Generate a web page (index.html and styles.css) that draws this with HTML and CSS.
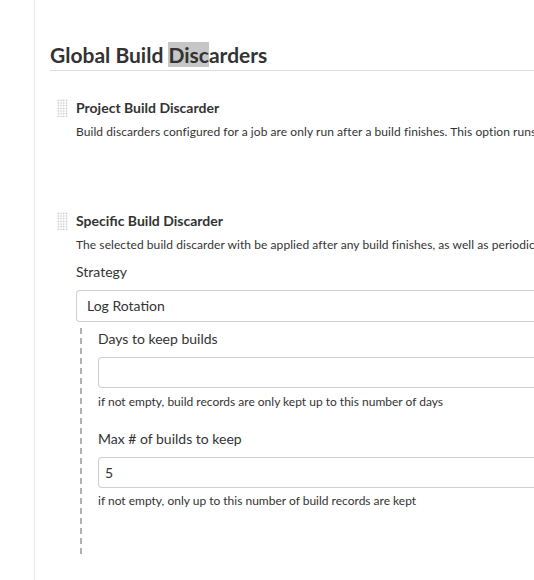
FILE: index.html
```html
<!DOCTYPE html>
<html lang="en">
<head>
    <meta charset="UTF-8">
    <title>Global Build Discarders</title>
    <link rel="stylesheet" href="styles.css">
</head>
<body>
    <div class="page">
        <section class="config-section">
            <h2 class="section-title">Global Build <span class="selected">Disc</span>arders</h2>

            <div class="discarder">
                <span class="drag-handle"></span>
                <div class="discarder-body">
                    <div class="discarder-title">Project Build Discarder</div>
                    <div class="discarder-desc">Build discarders configured for a job are only run after a build finishes. This option runs</div>
                </div>
            </div>

            <div class="discarder specific">
                <span class="drag-handle"></span>
                <div class="discarder-body">
                    <div class="discarder-title">Specific Build Discarder</div>
                    <div class="discarder-desc">The selected build discarder with be applied after any build finishes, as well as periodic</div>

                    <div class="field-label strategy">Strategy</div>
                    <div class="select-box">Log Rotation</div>

                    <div class="nested">
                        <div class="field">
                            <div class="field-label">Days to keep builds</div>
                            <div class="text-box"></div>
                            <div class="field-help">if not empty, build records are only kept up to this number of days</div>
                        </div>
                        <div class="field">
                            <div class="field-label">Max # of builds to keep</div>
                            <div class="text-box">5</div>
                            <div class="field-help">if not empty, only up to this number of build records are kept</div>
                        </div>
                    </div>
                </div>
            </div>
        </section>
    </div>
</body>
</html>
```

FILE: styles.css
```css
body {
    margin: 0;
    font-family: Lato, "Noto Sans", sans-serif;
    color: #333;
    background-color: #fff;
    overflow: hidden;
}
.page {
    margin-left: 34px;
    border-left: 1px solid #e6e6e6;
    min-height: 580px;
    padding: 40px 0 0 15px;
    box-sizing: border-box;
}
.section-title {
    margin: 0;
    font-size: 21px;
    font-weight: 700;
    line-height: 30px;
    border-bottom: 1px solid #dcdcdc;
    white-space: nowrap;
}
.selected {
    background-color: #c6c6c6;
}
.discarder {
    display: flex;
    gap: 8px;
    padding-left: 7px;
    margin-top: 27px;
}
.discarder.specific {
    margin-top: 71px;
}
.drag-handle {
    width: 11px;
    height: 18px;
    flex-shrink: 0;
    margin-top: 1px;
    background-image: radial-gradient(circle, #c4c4c4 0.7px, transparent 1px);
    background-size: 2.7px 2.7px;
}
.discarder-body {
    flex: 1;
    min-width: 0;
    overflow: hidden;
}
.discarder-title {
    font-size: 14px;
    font-weight: 700;
    line-height: 20px;
    white-space: nowrap;
}
.discarder-desc {
    font-size: 12px;
    line-height: 16px;
    margin-top: 6px;
    letter-spacing: 0.07px;
    white-space: nowrap;
}
.field-label {
    font-size: 14px;
    line-height: 20px;
    white-space: nowrap;
}
.field-label.strategy {
    margin-top: 9px;
}
.select-box,
.text-box {
    height: 32px;
    box-sizing: border-box;
    border: 1px solid #cfcfcf;
    border-right: none;
    border-radius: 4px 0 0 4px;
    font-size: 14px;
    line-height: 30px;
    padding-left: 10px;
    margin-top: 8px;
}
.text-box {
    height: 31px;
    line-height: 29px;
    padding-left: 6px;
}
.nested {
    margin: 6px 0 0 4px;
    background-image: linear-gradient(to bottom, #b0b0b0 6px, transparent 6px);
    background-size: 2px 10px;
    background-repeat: repeat-y;
    padding: 1px 0 48px 18px;
}
.nested .field + .field {
    margin-top: 19px;
}
.field-help {
    font-size: 12px;
    line-height: 16px;
    margin-top: 6px;
    white-space: nowrap;
}
.field + .field .field-help {
    margin-top: 5px;
}
```
